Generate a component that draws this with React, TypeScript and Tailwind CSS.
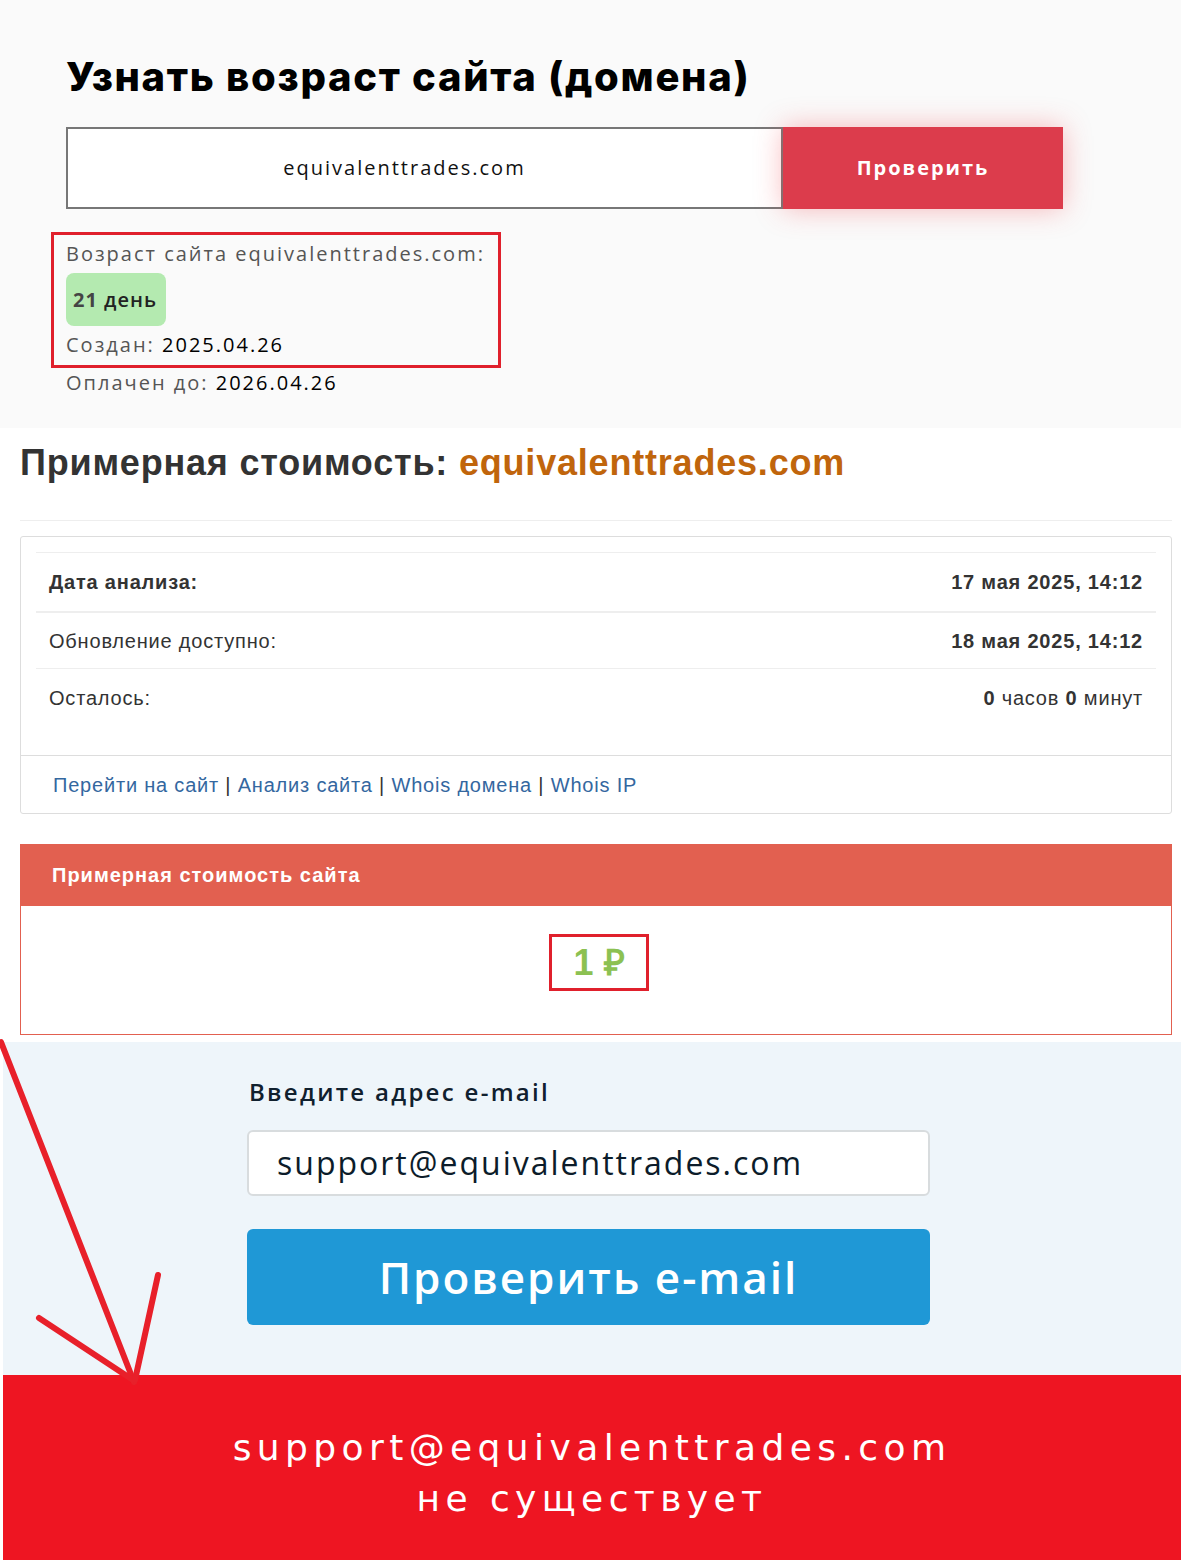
import React from "react";

const mont = { fontFamily: '"Open Sans", "Noto Sans", sans-serif' };
const wide = { fontFamily: '"DejaVu Sans", "Open Sans", sans-serif' };

export default function App() {
  return (
    <div className="relative w-[1181px] min-h-[1560px] bg-white overflow-hidden" style={{ fontFamily: '"Liberation Sans", Arial, sans-serif' }}>
      {/* Section 1 */}
      <section className="bg-[#fafafa] h-[428px] pl-[66px] pt-[53px]" style={mont}>
        <h1 className="text-[40px] leading-[48px] font-bold text-black tracking-[1.7px]" style={{ fontFamily: 'Inter, "Open Sans", sans-serif', fontWeight: 800 }}>
          Узнать возраст сайта (домена)
        </h1>
        <div className="mt-[26px] flex h-[82px] w-[997px]">
          <div className="flex-1 border-2 border-[#777] bg-white flex items-center justify-center pr-[40px] text-[20px] tracking-[2px] text-[#111]">
            equivalenttrades.com
          </div>
          <button className="w-[280px] bg-[#dc3c4c] text-white text-[20px] font-bold tracking-[2px] shadow-[0_0_28px_rgba(240,60,70,0.35)]">
            Проверить
          </button>
        </div>
        <div className="mt-[23px] -ml-[15px] w-[450px] border-[3px] border-[#e0202c] pl-[12px] pt-[5px] pb-[6px] text-[20px] leading-[28px] tracking-[2px]">
          <div className="text-[#555]">Возраст сайта equivalenttrades.com:</div>
          <div className="mt-[5px] inline-flex items-center h-[53px] w-[100px] pl-[7px] rounded-[8px] bg-[#b4eab0] text-[#222] tracking-[1px]">
            <span className="font-bold text-[#444]">21</span>&nbsp;<span className="font-semibold">день</span>
          </div>
          <div className="mt-[5px] text-[#555]">Создан: <span className="text-black">2025.04.26</span></div>
        </div>
        <div className="mt-[1px] text-[20px] leading-[28px] tracking-[2px] text-[#555]">Оплачен до: <span className="text-black">2026.04.26</span></div>
      </section>

      {/* Section 2 */}
      <section className="bg-white pt-[13px] pb-[7px]">
        <h2 className="pl-[20px] text-[36px] leading-[44px] font-bold text-[#333] tracking-[0.8px]">
          Примерная стоимость: <span className="text-[#c0650c]">equivalenttrades.com</span>
        </h2>
        <div className="mt-[35px] ml-[20px] w-[1152px] h-px bg-[#eee]" />
        <div className="mt-[15px] ml-[20px] w-[1152px] border border-[#ddd] rounded-[3px] text-[20px] text-[#333] tracking-[0.8px]">
          <div className="px-[15px] pt-[15px] h-[218px]">
            <div className="border-t border-[#eee]">
              <div className="flex justify-between items-center h-[58px] px-[13px]">
                <span className="font-bold">Дата анализа:</span>
                <span className="font-bold">17 мая 2025, 14:12</span>
              </div>
              <div className="flex justify-between items-center h-[57px] px-[13px] border-t-2 border-[#eee]">
                <span>Обновление доступно:</span>
                <span className="font-bold">18 мая 2025, 14:12</span>
              </div>
              <div className="flex justify-between items-center h-[58px] px-[13px] border-t border-[#eee]">
                <span>Осталось:</span>
                <span><b>0</b> часов <b>0</b> минут</span>
              </div>
            </div>
          </div>
          <div className="border-t border-[#ddd] h-[58px] flex items-center pl-[32px] text-[#333]">
            <span className="text-[#34679f]">Перейти на сайт</span>&nbsp;|&nbsp;
            <span className="text-[#34679f]">Анализ сайта</span>&nbsp;|&nbsp;
            <span className="text-[#34679f]">Whois домена</span>&nbsp;|&nbsp;
            <span className="text-[#34679f]">Whois IP</span>
          </div>
        </div>
        <div className="mt-[30px] ml-[20px] w-[1152px]">
          <div className="h-[62px] bg-[#e26050] flex items-center pl-[32px] text-white font-bold text-[20px] tracking-[1px]">
            Примерная стоимость сайта
          </div>
          <div className="border border-t-0 border-[#e26050] h-[129px] flex justify-center pt-[28px]">
            <div className="ml-[6px] w-[100px] h-[57px] border-[3px] border-[#e0202c] flex items-center justify-center text-[36px] font-bold text-[#8cc152]">
              1 ₽
            </div>
          </div>
        </div>
      </section>

      {/* Section 3 */}
      <section className="ml-[3px] bg-[#eef5fa] h-[333px] pl-[244px] pt-[34px]" style={mont}>
        <div className="text-[24px] leading-[32px] font-semibold text-[#10202e] tracking-[2.3px] pl-[2px]">Введите адрес e-mail</div>
        <div className="mt-[22px] w-[683px] h-[66px] bg-white border-2 border-[#d8dcde] rounded-[6px] flex items-center pl-[28px] text-[32px] text-[#0c1c2a] tracking-[2px]">
          support@equivalenttrades.com
        </div>
        <button className="mt-[33px] w-[683px] h-[96px] bg-[#1f98d6] rounded-[6px] text-white text-[44px] font-semibold tracking-[2px]">
          Проверить e-mail
        </button>
      </section>

      {/* Section 4 */}
      <section className="ml-[3px] bg-[#ee1522] h-[185px] flex flex-col items-center pt-[47px] text-white text-[36px] leading-[51px]" style={wide}>
        <div className="tracking-[5.4px]">support@equivalenttrades.com</div>
        <div className="tracking-[5.4px]">не существует</div>
      </section>

      {/* Arrow annotation */}
      <svg className="absolute left-0 top-0 pointer-events-none" width="1181" height="1560" viewBox="0 0 1181 1560">
        <g stroke="#e8202a" strokeWidth="6" strokeLinecap="round" fill="none">
          <line x1="1" y1="1042" x2="134" y2="1382" />
          <line x1="39" y1="1318" x2="133" y2="1380" />
          <line x1="158" y1="1275" x2="135" y2="1380" />
        </g>
      </svg>
    </div>
  );
}
